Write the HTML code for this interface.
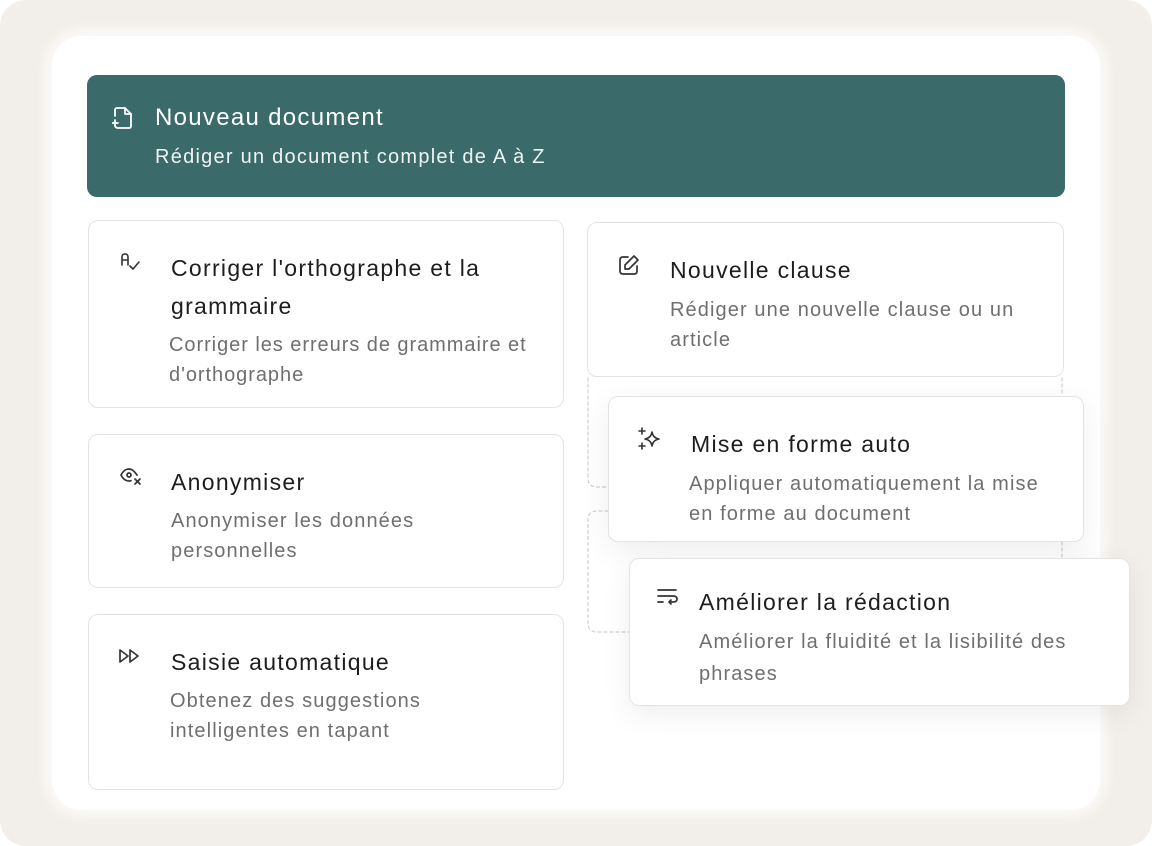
<!DOCTYPE html>
<html><head><meta charset="utf-8"><style>
*{margin:0;padding:0;box-sizing:border-box}
html,body{width:1152px;height:846px;overflow:hidden;background:#fff}
body{font-family:"Liberation Sans",sans-serif;position:relative}
.outer{position:absolute;left:0;top:0;width:1152px;height:846px;background:#f2eee9;border-radius:26px}
.inner{position:absolute;left:52px;top:36px;width:1048px;height:774px;background:#fff;border-radius:30px;box-shadow:0 0 14px 6px rgba(255,255,255,0.8)}
.head{position:absolute;left:87px;top:75px;width:978px;height:122px;background:#3a6a6a;border-radius:10px;color:#fff}
.card{position:absolute;background:#fff;border:1.5px solid #e3e3e3;border-radius:10px}
.ct{position:absolute;font-size:23px;letter-spacing:1.3px;color:#1d1d1d;line-height:38px;white-space:nowrap}
.cd{position:absolute;font-size:20px;letter-spacing:1.1px;color:#6f6f6f;line-height:30px;white-space:nowrap}
svg{position:absolute;fill:none;stroke-linecap:round;stroke-linejoin:round}
.float{box-shadow:0 8px 30px rgba(0,0,0,0.07)}
</style></head><body>
<div class="outer"></div>
<div class="inner"></div>
<svg style="left:0;top:0" width="1152" height="846"><path d="M588 378 V478 Q588 487 597 487 H608 M608 511 H597 Q588 511 588 520 V623 Q588 632 597 632 H629 M1062 378 V396 M1062 542 V558" stroke="#cfcfcf" stroke-width="1.2" stroke-dasharray="3 3"/></svg>
<div class="head">
<svg style="left:25px;top:31px" width="22" height="24" viewBox="0 0 22 24" stroke="#fff" stroke-width="1.8"><path d="M3 10 V4 Q3 2 5 2 H13 L19 8 V20 Q19 22 17 22 H6 Q4 22 3 20"/><path d="M13 2 V8 H19"/><path d="M3 14 V20 M0 17 H6"/></svg>
<div style="position:absolute;left:68px;top:30px;font-size:24px;letter-spacing:1.3px;line-height:26px;white-space:nowrap">Nouveau document</div>
<div style="position:absolute;left:68px;top:70px;font-size:20px;letter-spacing:1.25px;line-height:24px;color:#eef4f3;white-space:nowrap">Rédiger un document complet de A à Z</div>
</div>

<div class="card" style="left:88px;top:220px;width:476px;height:188px">
<svg style="left:31px;top:31px" width="22" height="22" viewBox="0 0 22 22" stroke="#333" stroke-width="1.6"><path d="M2 13 V5 Q2 2 5 2 Q8 2 8 5 V13 M2 8 H8"/><path d="M10 14 L13 17 L19 10"/></svg>
<div class="ct" style="left:82px;top:28px">Corriger l'orthographe et la<br>grammaire</div>
<div class="cd" style="left:80px;top:109px;letter-spacing:0.95px">Corriger les erreurs de grammaire et<br>d'orthographe</div>
</div>

<div class="card" style="left:88px;top:434px;width:476px;height:154px">
<svg style="left:30px;top:32px" width="24" height="22" viewBox="0 0 24 22" stroke="#333" stroke-width="1.7"><path d="M18 8 Q14 2 10 2 Q5 2 2 8 Q5 14 10 14 Q11 14 12 13.7"/><circle cx="10" cy="8" r="2"/><path d="M16 12 L21 17 M21 12 L16 17"/></svg>
<div class="ct" style="left:82px;top:28px">Anonymiser</div>
<div class="cd" style="left:82px;top:71px">Anonymiser les données<br>personnelles</div>
</div>

<div class="card" style="left:88px;top:614px;width:476px;height:176px">
<svg style="left:29px;top:33px" width="24" height="18" viewBox="0 0 24 18" stroke="#333" stroke-width="1.7"><path d="M2 2 L10 8 L2 14 Z M12 2 L20 8 L12 14 Z"/></svg>
<div class="ct" style="left:82px;top:28px">Saisie automatique</div>
<div class="cd" style="left:81px;top:71px">Obtenez des suggestions<br>intelligentes en tapant</div>
</div>

<div class="card" style="left:587px;top:222px;width:477px;height:155px">
<svg style="left:30px;top:31px" width="22" height="22" viewBox="0 0 22 22" stroke="#333" stroke-width="1.7"><path d="M10 3 H5 Q2 3 2 6 V17 Q2 20 5 20 H16 Q19 20 19 17 V12"/><path d="M16 2 L20 6 L11 15 H7 V11 Z"/></svg>
<div class="ct" style="left:82px;top:28px">Nouvelle clause</div>
<div class="cd" style="left:82px;top:72px">Rédiger une nouvelle clause ou un<br>article</div>
</div>

<div class="card float" style="left:608px;top:396px;width:476px;height:146px">
<svg style="left:28px;top:29px" width="26" height="26" viewBox="0 0 26 26" stroke="#333" stroke-width="1.6"><path d="M15 6 Q16 12 22 13 Q16 14 15 20 Q14 14 8 13 Q14 12 15 6 Z"/><path d="M5 2 V8 M2 5 H8 M5 17 V23 M2 20 H8"/></svg>
<div class="ct" style="left:82px;top:28px">Mise en forme auto</div>
<div class="cd" style="left:80px;top:72px">Appliquer automatiquement la mise<br>en forme au document</div>
</div>

<div class="card float" style="left:629px;top:558px;width:501px;height:148px">
<svg style="left:26px;top:28px" width="24" height="20" viewBox="0 0 24 20" stroke="#333" stroke-width="1.7"><path d="M2 3 H20 M2 9 H17 Q21 9 21 12 Q21 15 17 15 H13 M15 13 L13 15 L15 17 M2 15 H7"/></svg>
<div class="ct" style="left:69px;top:24px">Améliorer la rédaction</div>
<div class="cd" style="left:69px;top:67px;line-height:32px">Améliorer la fluidité et la lisibilité des<br>phrases</div>
</div>
</body></html>
